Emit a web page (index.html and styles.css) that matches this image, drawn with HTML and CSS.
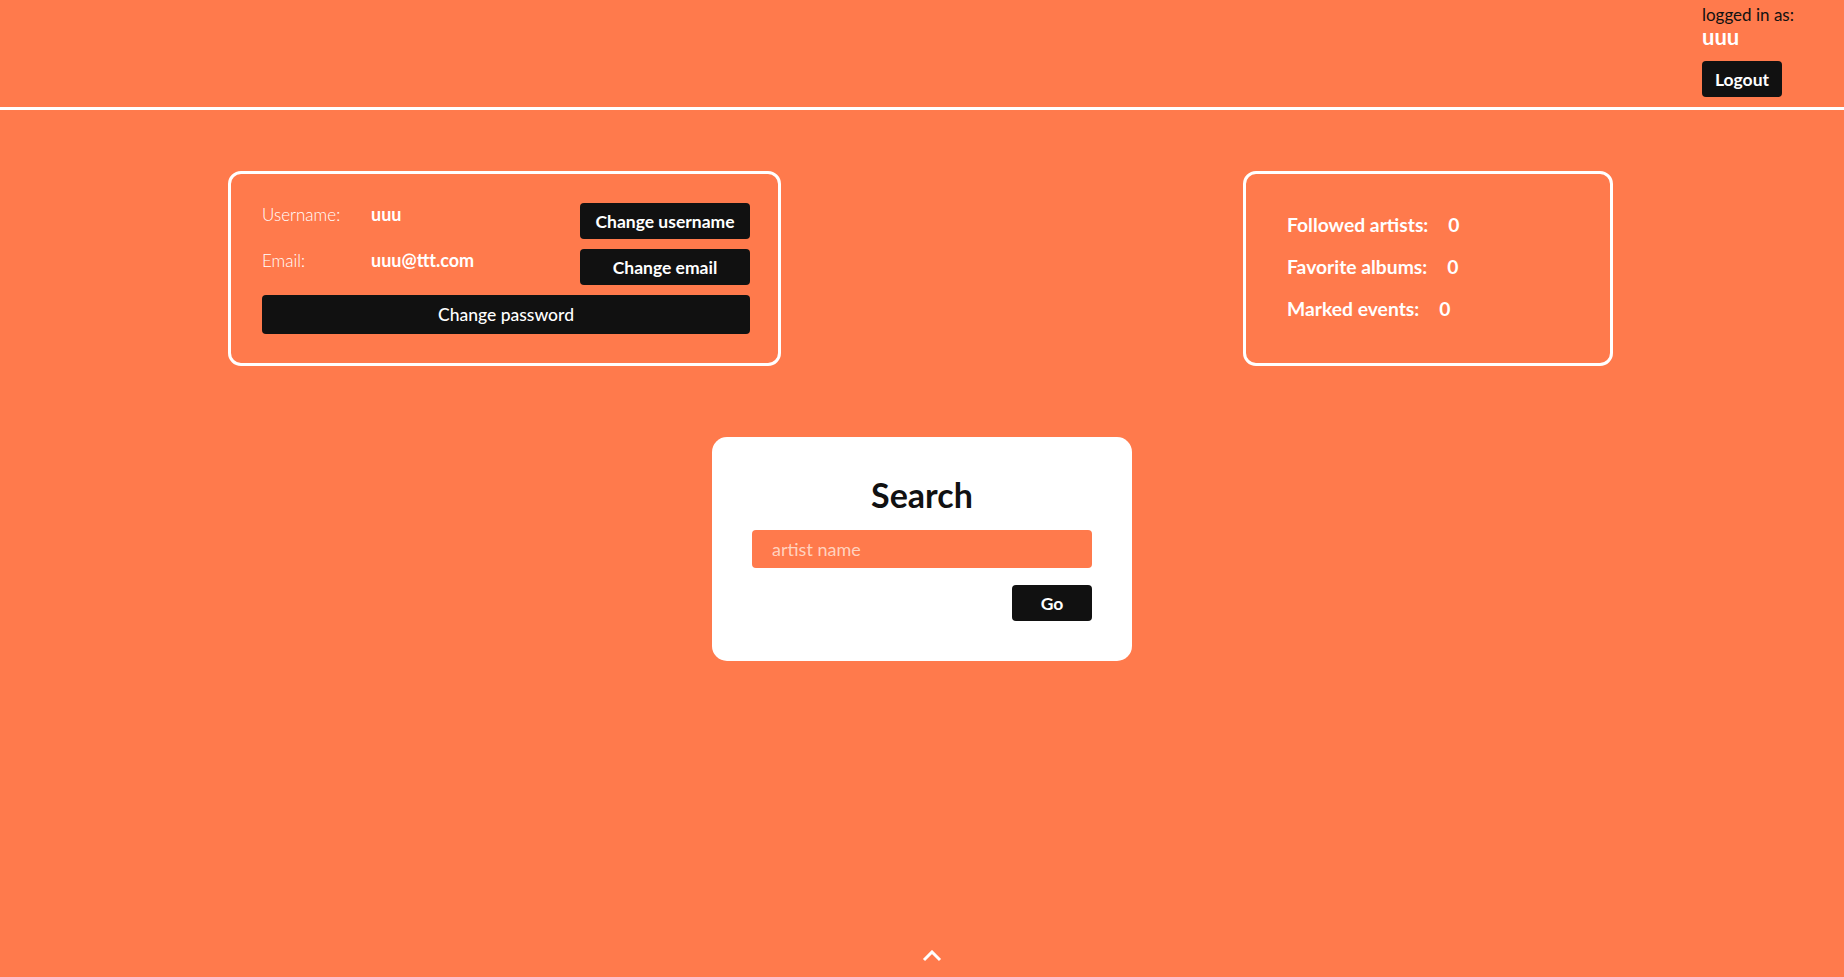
FILE: index.html
```html
<!DOCTYPE html>
<html lang="en">
<head>
<meta charset="utf-8">
<title>Profile</title>
<link rel="stylesheet" href="styles.css">
</head>
<body>
<header class="topbar">
  <div class="session">
    <div class="session-label">logged in as:</div>
    <div class="session-user">uuu</div>
    <button class="btn btn-logout">Logout</button>
  </div>
</header>
<main class="main">
  <section class="cards">
    <div class="card card-account">
      <div class="account-grid">
        <div class="field">
          <span class="field-label">Username:</span>
          <span class="field-value">uuu</span>
        </div>
        <button class="btn btn-side">Change username</button>
        <div class="field">
          <span class="field-label">Email:</span>
          <span class="field-value">uuu@ttt.com</span>
        </div>
        <button class="btn btn-side">Change email</button>
        <button class="btn btn-wide">Change password</button>
      </div>
    </div>
    <div class="card card-stats">
      <div class="stat"><span class="stat-label">Followed artists:</span><span class="stat-value">0</span></div>
      <div class="stat"><span class="stat-label">Favorite albums:</span><span class="stat-value">0</span></div>
      <div class="stat"><span class="stat-label">Marked events:</span><span class="stat-value">0</span></div>
    </div>
  </section>
  <section class="search">
    <h2 class="search-title">Search</h2>
    <input class="search-input" type="text" placeholder="artist name">
    <div class="search-actions">
      <button class="btn btn-go">Go</button>
    </div>
  </section>
</main>
<div class="to-top">
  <svg width="20" height="12" viewBox="0 0 20 12"><path d="M2 10 L10 2 L18 10" fill="none" stroke="#fff" stroke-width="3"/></svg>
</div>
</body>
</html>
```

FILE: styles.css
```css
* { box-sizing: border-box; }
html, body { margin: 0; padding: 0; }
body {
  background: #ff7a4c;
  font-family: Lato, "Open Sans", sans-serif;
  color: #fff;
  height: 977px;
  overflow: hidden;
  position: relative;
}
.topbar {
  height: 110px;
  border-bottom: 3px solid #fff;
  display: flex;
  justify-content: flex-end;
  padding-right: 42px;
}
.session {
  width: 100px;
  padding-top: 5px;
}
.session-label {
  color: #111;
  font-size: 17px;
  line-height: 20px;
}
.session-user {
  font-size: 22px;
  font-weight: 700;
  line-height: 24px;
}
.btn {
  background: #111;
  color: #fff;
  border: none;
  border-radius: 4px;
  font-family: inherit;
  font-weight: 700;
  font-size: 17.5px;
  cursor: pointer;
  padding: 0;
}
.btn-logout {
  margin-top: 12px;
  width: 80px;
  height: 36px;
}
.cards {
  display: flex;
  justify-content: space-between;
  padding: 61px 231px 0 228px;
}
.card {
  border: 3px solid #fff;
  border-radius: 13px;
  height: 195px;
}
.card-account {
  width: 553px;
  padding: 29px 28px 0 31px;
}
.account-grid {
  display: grid;
  grid-template-columns: 1fr 170px;
  column-gap: 10px;
  row-gap: 10px;
}
.field {
  display: flex;
  align-items: flex-start;
  height: 36px;
}
.field-label {
  width: 109px;
  font-weight: 300;
  font-size: 17px;
  line-height: 24px;
}
.field-value {
  font-weight: 700;
  font-size: 18px;
  line-height: 22px;
}
.btn-side { height: 36px; }
.btn-wide {
  grid-column: 1 / 3;
  height: 39px;
  font-weight: 500;
}
.card-stats {
  width: 370px;
  padding: 37px 0 0 41px;
  display: flex;
  flex-direction: column;
  gap: 15px;
}
.stat {
  font-size: 19.3px;
  font-weight: 700;
  line-height: 27px;
  display: flex;
  gap: 20px;
}
.search {
  width: 420px;
  margin: 71px auto 0;
  background: #fff;
  border-radius: 15px;
  padding: 38px 40px 40px;
  display: flex;
  flex-direction: column;
}
.search-title {
  margin: 0;
  color: #111;
  text-align: center;
  font-size: 34px;
  font-weight: 700;
  line-height: 40px;
}
.search-input {
  margin-top: 15px;
  height: 38px;
  border: none;
  border-radius: 4px;
  background: #ff7a4c;
  padding: 0 20px;
  font-family: inherit;
  font-size: 18px;
  color: #fff;
  outline: none;
}
.search-input::placeholder { color: #ffd2bf; }
.search-actions {
  margin-top: 17px;
  display: flex;
  justify-content: flex-end;
}
.btn-go {
  width: 80px;
  height: 36px;
}
.to-top {
  position: absolute;
  left: 922px;
  top: 950px;
  line-height: 0;
}
```
